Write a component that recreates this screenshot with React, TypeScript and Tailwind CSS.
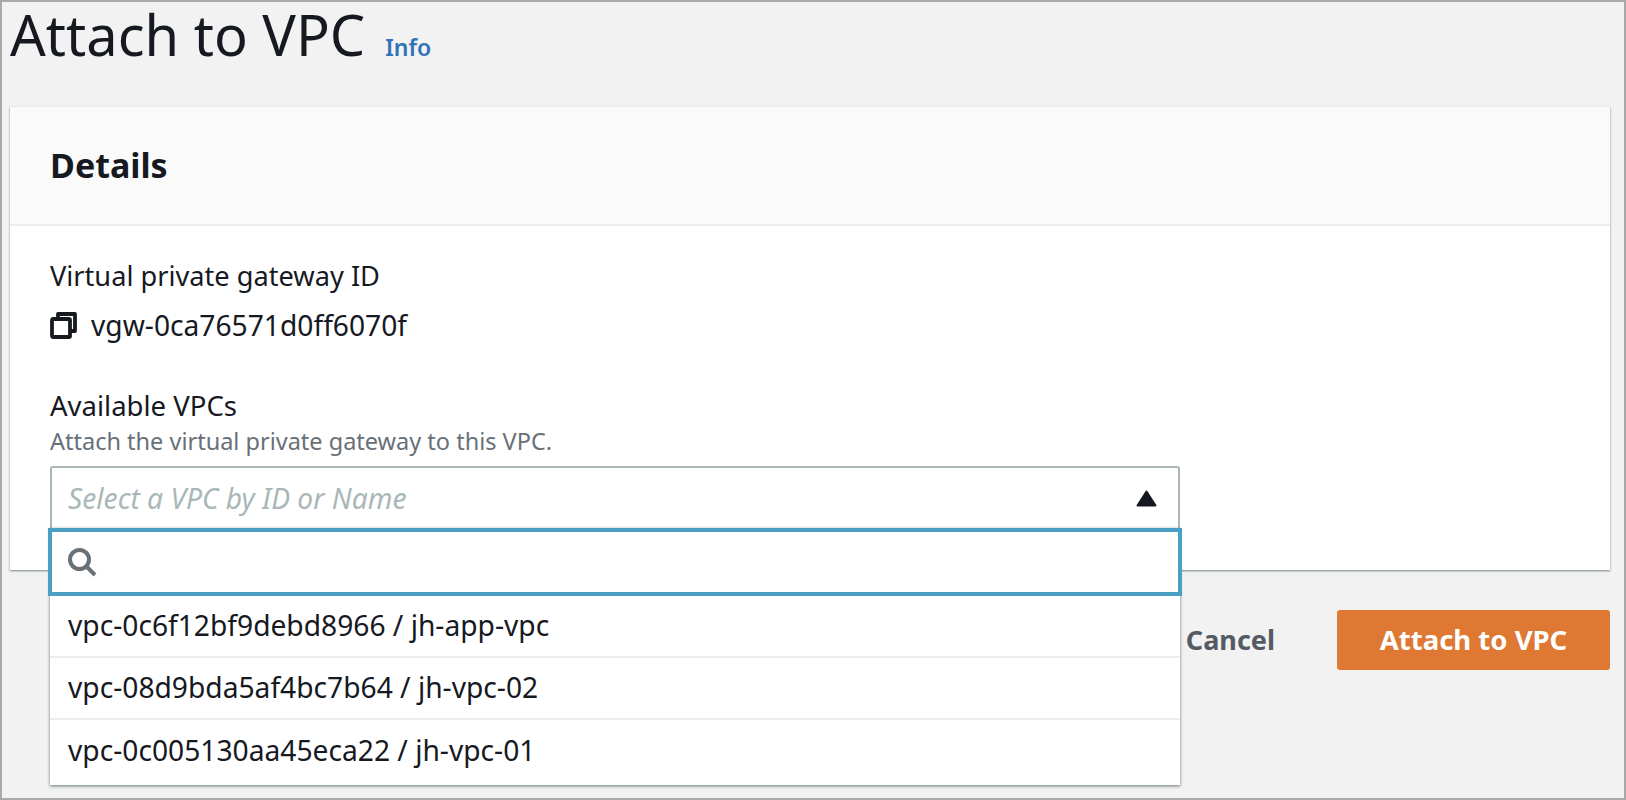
export default function App() {
  const font = { fontFamily: '"Noto Sans", sans-serif' };
  return (
    <div style={font} className="w-[1626px] h-[800px] bg-[#f2f2f3] border-2 border-[#a9a9a9] flex flex-col text-[#16191f] box-border">
      <div className="flex items-baseline gap-5 pl-2 h-[105px]">
        <h1 className="text-[56px] leading-[64px] font-normal">Attach to VPC</h1>
        <a className="text-[23px] font-semibold text-[#2f74b5]">Info</a>
      </div>
      <div className="ml-2 w-[1600px] h-[463px] bg-white shadow-[0_1px_2px_rgba(0,28,36,0.5)] flex flex-col">
        <div className="h-[119px] bg-[#fafafa] border-b-2 border-[#eaeded] flex items-center pl-10">
          <h2 className="text-[34px] font-bold leading-none pb-0.5">Details</h2>
        </div>
        <div className="pl-10 pt-[28px] flex flex-col">
          <div className="text-[27.2px] leading-[44px]">Virtual private gateway ID</div>
          <div className="flex items-center gap-[14px] text-[28.2px] leading-[44px] mt-[5px]">
            <svg width="27" height="27" viewBox="0 0 27 27" fill="none" stroke="#16191f" strokeWidth="3.8" strokeLinejoin="round">
              <path d="M8 6V2h17v17h-4" />
              <rect x="2" y="7" width="18" height="18" rx="1" />
            </svg>
            <span>vgw-0ca76571d0ff6070f</span>
          </div>
          <div className="text-[27.5px] leading-[40px] mt-[39px]">Available VPCs</div>
          <div className="text-[23.5px] leading-[30px] text-[#687078]">Attach the virtual private gateway to this VPC.</div>
          <div className="relative w-[1130px] mt-[10px]">
            <div className="h-[63px] bg-white border-2 border-[#aab7b8] border-b-0 rounded-t-[3px] flex items-center justify-between pl-[16px] pr-[21px] pb-[1px]">
              <span className="text-[28.2px] italic text-[#aab7b8]">Select a VPC by ID or Name</span>
              <svg width="21" height="17" viewBox="0 0 21 17"><path d="M10.5 1.5 19.5 15.5H1.5z" fill="#16191f" stroke="#16191f" strokeWidth="2" strokeLinejoin="round" /></svg>
            </div>
            <div className="absolute left-0 right-0 top-[62px] bg-white shadow-[0_1px_3px_rgba(0,28,36,0.6)] flex flex-col">
              <div className="-mx-[2px] h-[68px] border-[4px] border-[#4a9fc3] flex items-center pl-[15px] bg-white">
                <svg width="30" height="30" viewBox="0 0 30 30" fill="none" stroke="#687078" strokeWidth="4"><circle cx="12.5" cy="12.5" r="9.5" /><path d="m19 19 9 9" /></svg>
              </div>
              {["vpc-0c6f12bf9debd8966 / jh-app-vpc", "vpc-08d9bda5af4bc7b64 / jh-vpc-02", "vpc-0c005130aa45eca22 / jh-vpc-01"].map((t, i) => (
                <div key={t} className={"pl-[18px] text-[28.2px] flex items-center " + (i < 2 ? "h-[62px] pb-[2px] border-b-2 border-[#eaeded]" : "h-[65px] pb-[4px]")}>{t}</div>
              ))}
            </div>
          </div>
        </div>
      </div>
      <div className="ml-2 w-[1600px] flex justify-end items-center gap-[62px] mt-[40px]">
        <span className="text-[27px] font-bold text-[#545b64]">Cancel</span>
        <button className="w-[273px] h-[60px] rounded-[3px] bg-[#df7832] text-white text-[27.5px] font-bold">Attach to VPC</button>
      </div>
    </div>
  );
}
